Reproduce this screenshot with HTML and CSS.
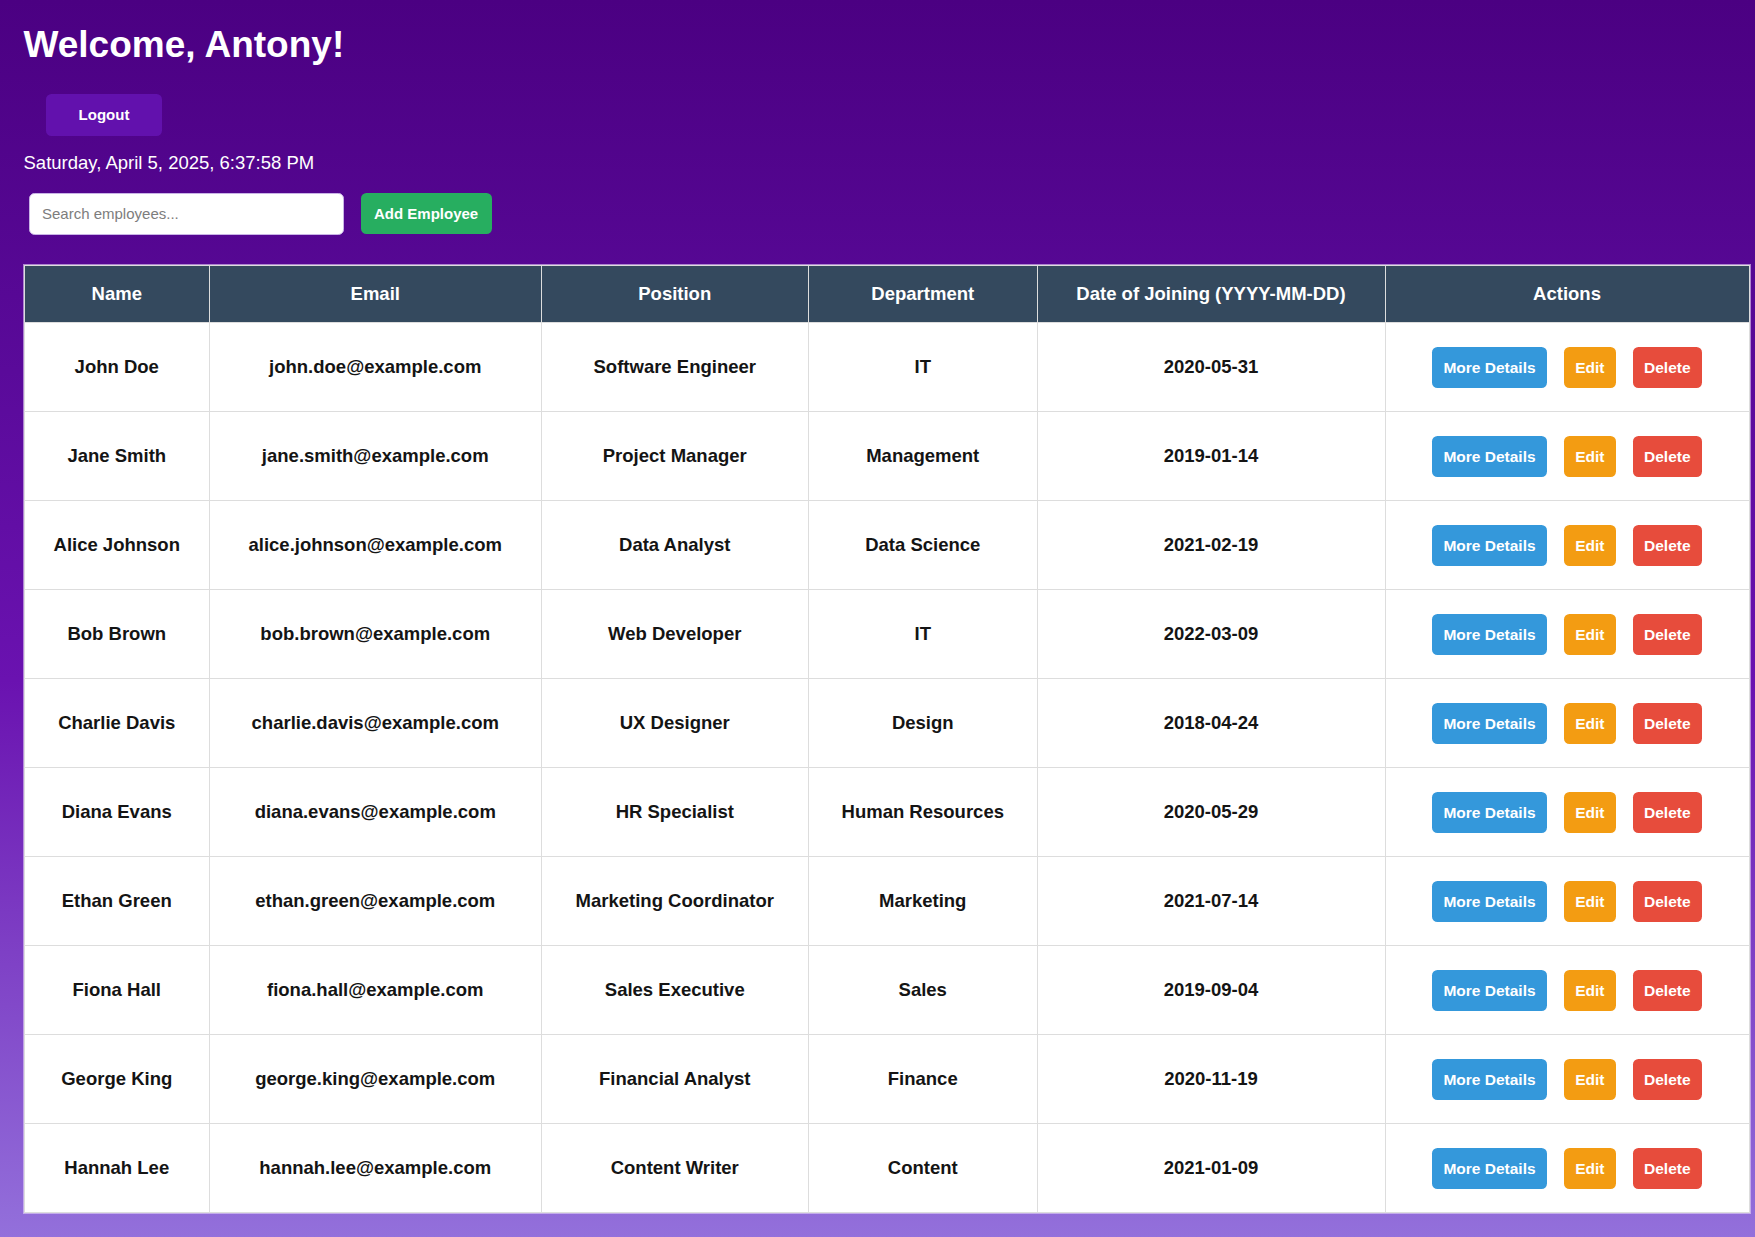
FILE: index.html
```html
<!DOCTYPE html>
<html lang="en">
<head>
<meta charset="UTF-8">
<title>Employee Dashboard</title>
<link rel="stylesheet" href="styles.css">
</head>
<body>
<div class="page">
  <h1 class="welcome">Welcome, Antony!</h1>
  <button class="btn btn-logout">Logout</button>
  <p class="datetime">Saturday, April 5, 2025, 6:37:58 PM</p>
  <div class="toolbar">
    <input class="search" type="text" placeholder="Search employees...">
    <button class="btn btn-add">Add Employee</button>
  </div>
  <table class="emp-table">
    <colgroup>
      <col class="c-name"><col class="c-email"><col class="c-pos"><col class="c-dept"><col class="c-date"><col class="c-act">
    </colgroup>
    <thead>
      <tr><th>Name</th><th>Email</th><th>Position</th><th>Department</th><th>Date of Joining (YYYY-MM-DD)</th><th>Actions</th></tr>
    </thead>
    <tbody>
      <tr><td>John Doe</td><td>john.doe@example.com</td><td>Software Engineer</td><td>IT</td><td>2020-05-31</td><td><div class="actions"><button class="btn btn-more">More Details</button><button class="btn btn-edit">Edit</button><button class="btn btn-del">Delete</button></div></td></tr>
      <tr><td>Jane Smith</td><td>jane.smith@example.com</td><td>Project Manager</td><td>Management</td><td>2019-01-14</td><td><div class="actions"><button class="btn btn-more">More Details</button><button class="btn btn-edit">Edit</button><button class="btn btn-del">Delete</button></div></td></tr>
      <tr><td>Alice Johnson</td><td>alice.johnson@example.com</td><td>Data Analyst</td><td>Data Science</td><td>2021-02-19</td><td><div class="actions"><button class="btn btn-more">More Details</button><button class="btn btn-edit">Edit</button><button class="btn btn-del">Delete</button></div></td></tr>
      <tr><td>Bob Brown</td><td>bob.brown@example.com</td><td>Web Developer</td><td>IT</td><td>2022-03-09</td><td><div class="actions"><button class="btn btn-more">More Details</button><button class="btn btn-edit">Edit</button><button class="btn btn-del">Delete</button></div></td></tr>
      <tr><td>Charlie Davis</td><td>charlie.davis@example.com</td><td>UX Designer</td><td>Design</td><td>2018-04-24</td><td><div class="actions"><button class="btn btn-more">More Details</button><button class="btn btn-edit">Edit</button><button class="btn btn-del">Delete</button></div></td></tr>
      <tr><td>Diana Evans</td><td>diana.evans@example.com</td><td>HR Specialist</td><td>Human Resources</td><td>2020-05-29</td><td><div class="actions"><button class="btn btn-more">More Details</button><button class="btn btn-edit">Edit</button><button class="btn btn-del">Delete</button></div></td></tr>
      <tr><td>Ethan Green</td><td>ethan.green@example.com</td><td>Marketing Coordinator</td><td>Marketing</td><td>2021-07-14</td><td><div class="actions"><button class="btn btn-more">More Details</button><button class="btn btn-edit">Edit</button><button class="btn btn-del">Delete</button></div></td></tr>
      <tr><td>Fiona Hall</td><td>fiona.hall@example.com</td><td>Sales Executive</td><td>Sales</td><td>2019-09-04</td><td><div class="actions"><button class="btn btn-more">More Details</button><button class="btn btn-edit">Edit</button><button class="btn btn-del">Delete</button></div></td></tr>
      <tr><td>George King</td><td>george.king@example.com</td><td>Financial Analyst</td><td>Finance</td><td>2020-11-19</td><td><div class="actions"><button class="btn btn-more">More Details</button><button class="btn btn-edit">Edit</button><button class="btn btn-del">Delete</button></div></td></tr>
      <tr><td>Hannah Lee</td><td>hannah.lee@example.com</td><td>Content Writer</td><td>Content</td><td>2021-01-09</td><td><div class="actions"><button class="btn btn-more">More Details</button><button class="btn btn-edit">Edit</button><button class="btn btn-del">Delete</button></div></td></tr>
    </tbody>
  </table>
</div>
</body>
</html>
```

FILE: styles.css
```css
html, body {
  margin: 0;
  padding: 0;
}

body {
  font-family: "Liberation Sans", Arial, sans-serif;
  background: linear-gradient(to bottom, #4b0082 0%, #5a0a9a 30%, #6a12b0 55%, #9370db 100%);
  min-height: 100vh;
  color: #fff;
}

.page {
  box-sizing: border-box;
  height: 1237px;
  padding: 24px 6px 0 23.5px;
  overflow: hidden;
}

.welcome {
  margin: 0 0 29px;
  font-size: 37px;
  line-height: 41px;
  font-weight: bold;
  color: #fff;
}

.btn {
  font-family: "Liberation Sans", Arial, sans-serif;
  font-size: 15px;
  line-height: 17px;
  font-weight: bold;
  color: #fff;
  border: none;
  border-radius: 5.5px;
  cursor: pointer;
}

.btn-logout {
  display: block;
  margin-left: 22.5px;
  padding: 12.25px 32.6px;
  background: #6211ad;
}

.datetime {
  margin: 16px 0 20px;
  font-size: 18.5px;
  line-height: 21px;
  color: #fff;
}

.toolbar {
  display: flex;
  align-items: center;
  gap: 16.5px;
  padding-left: 5.5px;
  margin-bottom: 30px;
}

.search {
  box-sizing: border-box;
  width: 315px;
  height: 42.5px;
  padding: 0 12px;
  font-family: "Liberation Sans", Arial, sans-serif;
  font-size: 15px;
  border: 1px solid #c9b3e6;
  border-radius: 5.5px;
  background: #fff;
  color: #333;
  outline: none;
}

.search::placeholder {
  color: #7d7d7d;
}

.btn-add {
  height: 41px;
  padding: 0 13.5px;
  background: #27ae60;
}

.emp-table {
  width: 1725px;
  table-layout: fixed;
  border-collapse: collapse;
  background: #fff;
  box-shadow: 0 0 0 1px rgba(230, 215, 245, 0.6);
}

.c-name { width: 185.5px; }
.c-email { width: 331.5px; }
.c-pos { width: 267.5px; }
.c-dept { width: 228.5px; }
.c-date { width: 348px; }
.c-act { width: 364px; }

.emp-table th,
.emp-table td {
  border: 1px solid #dddddd;
  text-align: center;
  vertical-align: middle;
  font-size: 18.5px;
  line-height: 20px;
  font-weight: bold;
  padding: 18px 6px;
  white-space: nowrap;
}

.emp-table th {
  background: #34495e;
  color: #fff;
}

.emp-table td {
  color: #141414;
}

.actions {
  display: flex;
  justify-content: center;
  gap: 17.2px;
  padding: 5.5px 0;
}

.actions .btn {
  height: 41px;
  padding: 0 11.2px;
  font-size: 15.5px;
}

.btn-more { background: #3498db; }
.btn-edit { background: #f39c12; }
.btn-del { background: #e74c3c; }
```
